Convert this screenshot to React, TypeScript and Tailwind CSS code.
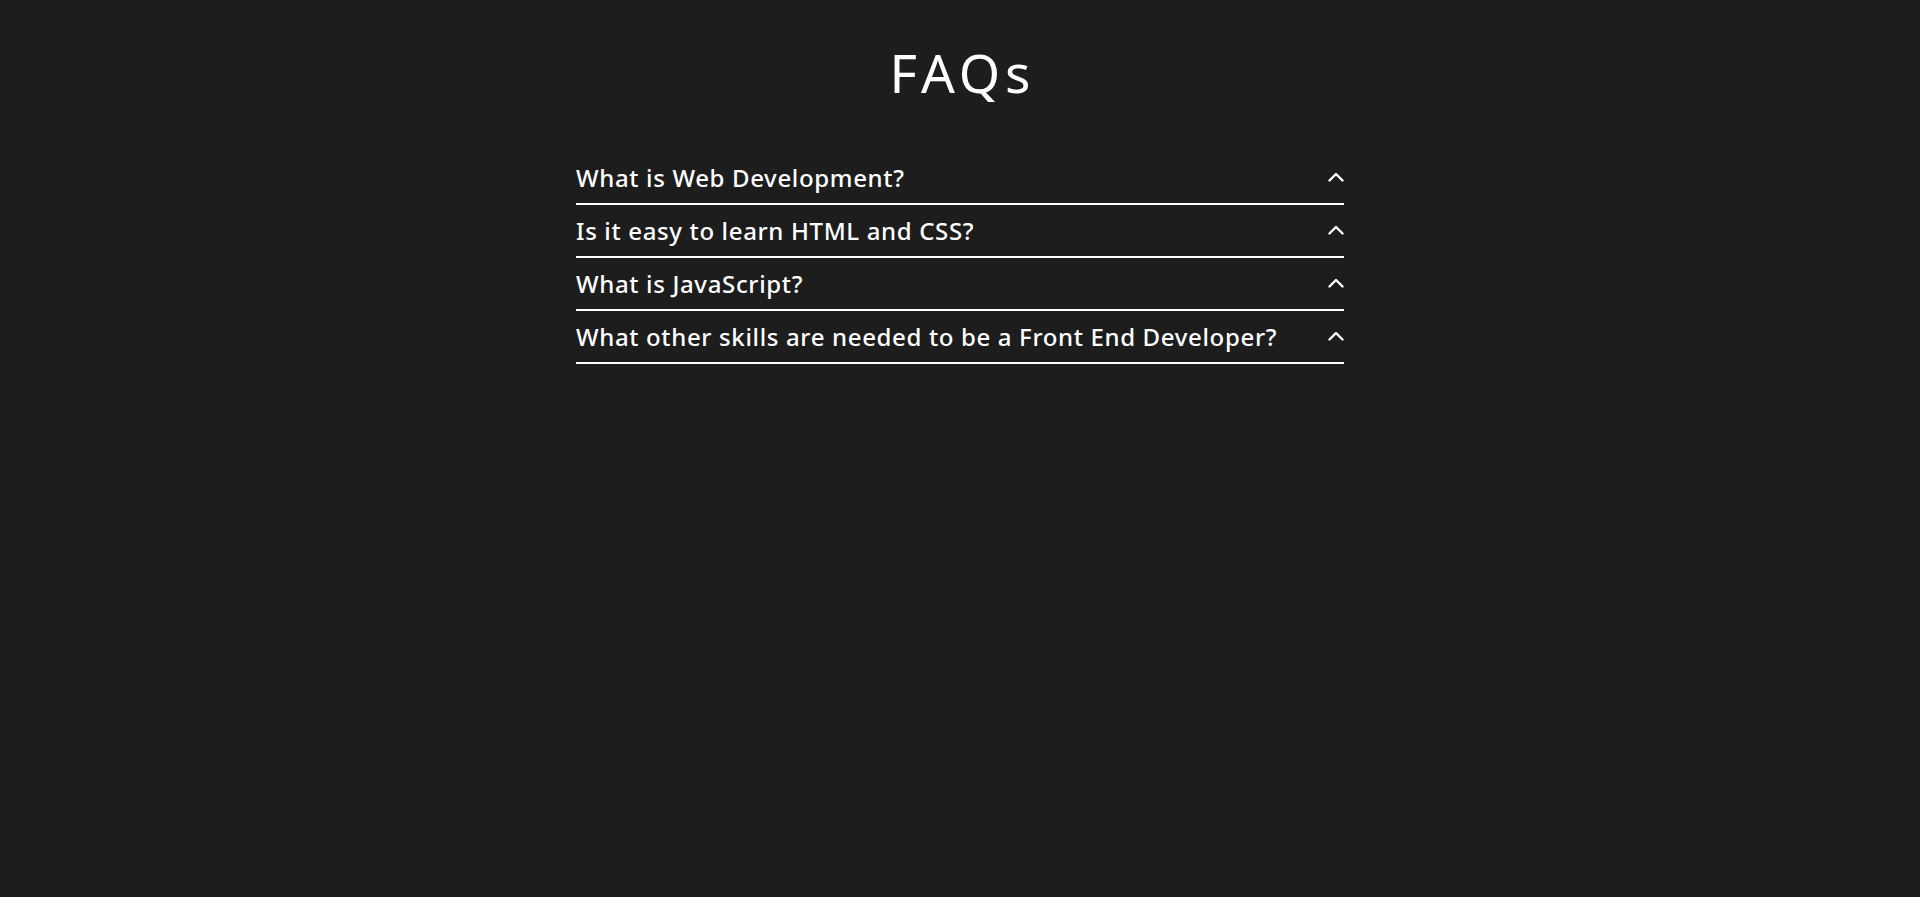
import React from "react";

const questions = [
  "What is Web Development?",
  "Is it easy to learn HTML and CSS?",
  "What is JavaScript?",
  "What other skills are needed to be a Front End Developer?",
];

function Chevron() {
  return (
    <svg width="16" height="10" viewBox="0 0 16 10" className="shrink-0 -mt-[3px]">
      <polyline points="1.5,8.5 8,2 14.5,8.5" fill="none" stroke="white" strokeWidth="2.4" strokeLinecap="round" strokeLinejoin="round" />
    </svg>
  );
}

export default function App() {
  return (
    <div className="min-h-[897px] w-full bg-[#1d1d1d] text-white" style={{ fontFamily: "'Noto Sans', Lato, sans-serif" }}>
      <div className="mx-auto w-[768px] pt-[43px]">
        <h1 className="pl-[5px] text-center text-[53px] leading-[60px] tracking-[5px] font-normal">FAQs</h1>
        <div className="mt-[49px] flex flex-col">
          {questions.map((q) => (
            <button
              key={q}
              className="flex w-full items-center justify-between border-b-2 border-white pt-[11px] pb-[10px] text-left text-[24px] leading-[30px] tracking-[0.65px] font-medium"
            >
              <span>{q}</span>
              <Chevron />
            </button>
          ))}
        </div>
      </div>
    </div>
  );
}
